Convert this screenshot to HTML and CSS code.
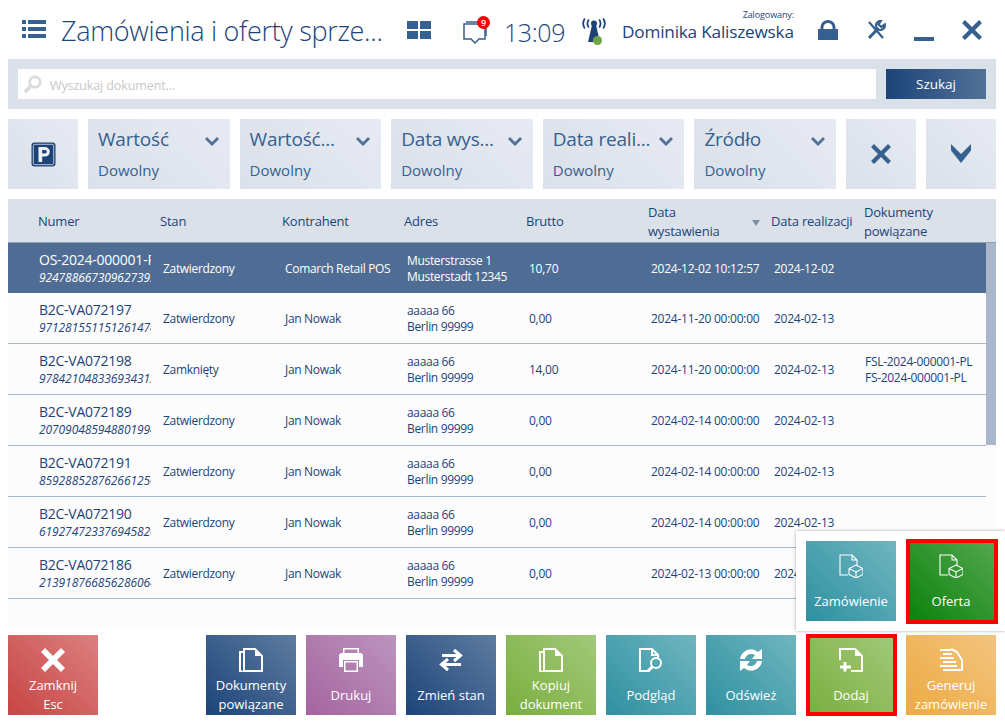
FILE: index.html
```html
<!DOCTYPE html>
<html lang="pl">
<head>
  <meta charset="UTF-8">
  <title>Zamówienia i oferty sprzedaży</title>
  <link rel="stylesheet" href="styles.css">
</head>
<body>
  <header class="topbar">
    <svg class="ico menu-ico" viewBox="0 0 24 18"><path d="M0 0h4v4H0zM6 0h18v4H6zM0 7h4v4H0zM6 7h18v4H6zM0 14h4v4H0zM6 14h18v4H6z"/></svg>
    <h1 class="title">Zamówienia i oferty sprze...</h1>
    <svg class="ico grid-ico" viewBox="0 0 24 18"><path d="M0 0h11v8H0zM13 0h11v8H13zM0 10h11v8H0zM13 10h11v8H13z"/></svg>
    <div class="chat">
      <svg class="ico chat-ico" viewBox="0 0 24 23"><path d="M1 3h21v15h-6l-4 4-4-4H1z"/><path d="M3 1h20v14"/></svg>
      <span class="chat-badge">9</span>
    </div>
    <span class="clock">13:09</span>
    <div class="signal">
      <svg class="ico signal-ico" viewBox="0 0 24 25"><path d="M10 7h4l4 17H6z"/><circle cx="12" cy="5.500" r="3"/><path class="wave" d="M6.800 1.500Q4 5.500 6.800 9.500M17.200 1.500Q20 5.500 17.200 9.500M2.800 0.500Q-.500 5.500 2.800 10.500M21.200 0.500Q24.500 5.500 21.200 10.500"/></svg>
      <span class="signal-dot"></span>
    </div>
    <div class="user">
      <span class="user-label">Zalogowany:</span>
      <span class="user-name">Dominika Kaliszewska</span>
    </div>
    <svg class="ico lock-ico" viewBox="0 0 20 20"><path d="M0 9h20v11H0z"/><path class="shackle" d="M4 10V7a6 5.500 0 0 1 12 0v3"/></svg>
    <svg class="ico tools-ico" viewBox="0 0 20 20"><path class="tool" d="M3 2l14 16"/><path class="tool wide" d="M3 18L12.500 8"/><path class="tool" d="M18.800 4.500a4.500 4.500 0 1 1-4-3.500L12.500 4.500l3 2.500z"/></svg>
    <span class="ico minimize-ico"></span>
    <svg class="ico close-ico" viewBox="0 0 20 20"><path d="M3 0l7 7 7-7 3 3-7 7 7 7-3 3-7-7-7 7-3-3 7-7-7-7z"/></svg>
  </header>

  <section class="search-bar">
    <div class="search-input">
      <svg class="search-ico" viewBox="0 0 20 20"><circle cx="12.500" cy="7.500" r="5.500" fill="none" stroke="#dcdcdc" stroke-width="3"/><path d="M8 12l-6 6" stroke="#dcdcdc" stroke-width="4"/></svg>
      <span class="search-text">Wyszukaj dokument...</span>
    </div>
    <button class="search-btn">Szukaj</button>
  </section>

  <section class="filters">
    <div class="tile-sq">
      <svg class="p-ico" viewBox="0 0 25 25"><rect x="0.500" y="0.500" width="24" height="24" rx="3" fill="#1c4479"/><rect x="2.300" y="2.300" width="20.400" height="20.400" rx="1.500" fill="none" stroke="#e0e5ec" stroke-width=".8"/><path d="M7.500 5h6.500a4.800 4.800 0 0 1 0 9.600h-2.800V20H7.500zM11.200 8v3.600H14a1.800 1.800 0 0 0 0-3.600z" fill="#eef1f5" fill-rule="evenodd"/></svg>
    </div>
    <div class="filter"><div class="filter-top"><span class="filter-name">Wartość</span><svg class="chev" viewBox="0 0 14 10"><path d="M0 2l2-2 5 5 5-5 2 2-7 7z"/></svg></div><span class="filter-val">Dowolny</span></div>
    <div class="filter"><div class="filter-top"><span class="filter-name">Wartość...</span><svg class="chev" viewBox="0 0 14 10"><path d="M0 2l2-2 5 5 5-5 2 2-7 7z"/></svg></div><span class="filter-val">Dowolny</span></div>
    <div class="filter"><div class="filter-top"><span class="filter-name">Data wys...</span><svg class="chev" viewBox="0 0 14 10"><path d="M0 2l2-2 5 5 5-5 2 2-7 7z"/></svg></div><span class="filter-val">Dowolny</span></div>
    <div class="filter"><div class="filter-top"><span class="filter-name">Data reali...</span><svg class="chev" viewBox="0 0 14 10"><path d="M0 2l2-2 5 5 5-5 2 2-7 7z"/></svg></div><span class="filter-val">Dowolny</span></div>
    <div class="filter"><div class="filter-top"><span class="filter-name">Źródło</span><svg class="chev" viewBox="0 0 14 10"><path d="M0 2l2-2 5 5 5-5 2 2-7 7z"/></svg></div><span class="filter-val">Dowolny</span></div>
    <div class="tile-sq"><svg class="x-ico" viewBox="0 0 20 20"><path d="M3 0l7 7 7-7 3 3-7 7 7 7-3 3-7-7-7 7-3-3 7-7-7-7z"/></svg></div>
    <div class="tile-sq"><svg class="down-ico" viewBox="0 0 20 20"><path d="M0 0l10 10L20 0v6.500L10 19 0 6.500z"/></svg></div>
  </section>

  <section class="grid">
    <div class="grid-head">
      <span class="c-num">Numer</span>
      <span class="c-stan">Stan</span>
      <span class="c-kon">Kontrahent</span>
      <span class="c-adr">Adres</span>
      <span class="c-bru">Brutto</span>
      <span class="c-wys">Data<br>wystawienia<i class="sort"></i></span>
      <span class="c-rea">Data realizacji</span>
      <span class="c-dok">Dokumenty<br>powiązane</span>
    </div>
    <div class="grid-body">
      <div class="rows">
        <div class="row selected">
          <div class="c-num"><b>OS-2024-000001-PL</b><em>92478866730962739312</em></div>
          <span class="c-stan">Zatwierdzony</span><span class="c-kon">Comarch Retail POS</span>
          <span class="c-adr">Musterstrasse 1<br>Musterstadt 12345</span><span class="c-bru">10,70</span>
          <span class="c-wys">2024-12-02 10:12:57</span><span class="c-rea">2024-12-02</span><span class="c-dok"></span>
        </div>
        <div class="row">
          <div class="c-num"><b>B2C-VA072197</b><em>97128155115126147412</em></div>
          <span class="c-stan">Zatwierdzony</span><span class="c-kon">Jan Nowak</span>
          <span class="c-adr">aaaaa 66<br>Berlin 99999</span><span class="c-bru">0,00</span>
          <span class="c-wys">2024-11-20 00:00:00</span><span class="c-rea">2024-02-13</span><span class="c-dok"></span>
        </div>
        <div class="row">
          <div class="c-num"><b>B2C-VA072198</b><em>97842104833693431212</em></div>
          <span class="c-stan">Zamknięty</span><span class="c-kon">Jan Nowak</span>
          <span class="c-adr">aaaaa 66<br>Berlin 99999</span><span class="c-bru">14,00</span>
          <span class="c-wys">2024-11-20 00:00:00</span><span class="c-rea">2024-02-13</span><span class="c-dok">FSL-2024-000001-PL<br>FS-2024-000001-PL</span>
        </div>
        <div class="row">
          <div class="c-num"><b>B2C-VA072189</b><em>20709048594880199412</em></div>
          <span class="c-stan">Zatwierdzony</span><span class="c-kon">Jan Nowak</span>
          <span class="c-adr">aaaaa 66<br>Berlin 99999</span><span class="c-bru">0,00</span>
          <span class="c-wys">2024-02-14 00:00:00</span><span class="c-rea">2024-02-13</span><span class="c-dok"></span>
        </div>
        <div class="row">
          <div class="c-num"><b>B2C-VA072191</b><em>85928852876266125012</em></div>
          <span class="c-stan">Zatwierdzony</span><span class="c-kon">Jan Nowak</span>
          <span class="c-adr">aaaaa 66<br>Berlin 99999</span><span class="c-bru">0,00</span>
          <span class="c-wys">2024-02-14 00:00:00</span><span class="c-rea">2024-02-13</span><span class="c-dok"></span>
        </div>
        <div class="row">
          <div class="c-num"><b>B2C-VA072190</b><em>61927472337694582012</em></div>
          <span class="c-stan">Zatwierdzony</span><span class="c-kon">Jan Nowak</span>
          <span class="c-adr">aaaaa 66<br>Berlin 99999</span><span class="c-bru">0,00</span>
          <span class="c-wys">2024-02-14 00:00:00</span><span class="c-rea">2024-02-13</span><span class="c-dok"></span>
        </div>
        <div class="row">
          <div class="c-num"><b>B2C-VA072186</b><em>21391876685628606412</em></div>
          <span class="c-stan">Zatwierdzony</span><span class="c-kon">Jan Nowak</span>
          <span class="c-adr">aaaaa 66<br>Berlin 99999</span><span class="c-bru">0,00</span>
          <span class="c-wys">2024-02-13 00:00:00</span><span class="c-rea">2024-02-13</span><span class="c-dok"></span>
        </div>
      </div>
      <div class="scrollbar"></div>
    </div>
  </section>

  <footer class="actions">
    <button class="act red">
      <svg viewBox="0 0 24 24"><path d="M4 0l8 8 8-8 4 4-8 8 8 8-4 4-8-8-8 8-4-4 8-8-8-8z"/></svg>
      <span>Zamknij<br>Esc</span>
    </button>
    <span class="spacer"></span>
    <button class="act navy">
      <svg viewBox="0 0 24 24" class="line"><path d="M5 1h11l7 7v15H5zM5 4H1v19l3 1h15"/><path class="solid" d="M16 1l7 7h-7z"/></svg>
      <span>Dokumenty<br>powiązane</span>
    </button>
    <button class="act purple">
      <svg viewBox="0 0 24 24"><path d="M4 5V0h16v5h-1.500V1.500h-13V5z"/><path d="M3 5h18a3 3 0 0 1 3 3v11h-4v-7H4v7H0V8a3 3 0 0 1 3-3z"/><path d="M5 13h14v11H5zM6.500 14.500v8h11v-8z" fill-rule="evenodd"/></svg>
      <span>Drukuj</span>
    </button>
    <button class="act navy">
      <svg viewBox="0 0 24 24" class="line heavy"><path d="M3 7.500h18M15 2l6.500 5.500L15 13"/><path d="M22 16.500H3M9 11l-6.500 5.500L9 22"/></svg>
      <span>Zmień stan</span>
    </button>
    <button class="act green">
      <svg viewBox="0 0 24 24" class="line"><path d="M5 1h11l7 7v15H5zM5 4H1v19l3 1h15"/><path class="solid" d="M16 1l7 7h-7z"/></svg>
      <span>Kopiuj<br>dokument</span>
    </button>
    <button class="act teal">
      <svg viewBox="0 0 24 24" class="line"><path d="M11 23H1V1h12l6 6v3M13 1v6h6"/><circle cx="17" cy="15" r="5"/><path d="M13.500 18.500l-5 5" stroke-width="3"/></svg>
      <span>Podgląd</span>
    </button>
    <button class="act teal">
      <svg viewBox="0 0 24 24"><path d="M1 11A11 11 0 0 1 19 4l4-3v10H13l3-4A6.500 6.500 0 0 0 6 11zM23 13A11 11 0 0 1 5 20l-4 3V13h10l-3 4a6.500 6.500 0 0 0 10-4z"/></svg>
      <span>Odśwież</span>
    </button>
    <button class="act green marked">
      <svg viewBox="0 0 24 24" class="line"><path d="M1 12V1h15l7 7v15H12"/><path class="solid" d="M16 1l7 7h-7z"/><path d="M6 14v9.500M1 19h11" stroke-width="3"/></svg>
      <span>Dodaj</span>
    </button>
    <button class="act orange">
      <svg viewBox="0 0 24 24" class="line"><path d="M1 2h11M4 6h9M1 10h14M4 14h13M1 18h17M4 22h19M12 1l6 3 5 8v11" stroke-width="2"/></svg>
      <span>Generuj<br>zamówienie</span>
    </button>
  </footer>

  <div class="popup">
    <button class="act teal">
      <svg viewBox="0 0 24 24" class="line thin"><path d="M9 21H1V1h12l5 5v5M13 1v5h5"/><path d="M17 11l7 3.500v6L17 24l-7-3.500v-6zM10 14.500l7 3.500 7-3.500M17 18v6"/></svg>
      <span>Zamówienie</span>
    </button>
    <button class="act dark-green marked-top">
      <svg viewBox="0 0 24 24" class="line thin"><path d="M9 21H1V1h12l5 5v5M13 1v5h5"/><path d="M17 11l7 3.500v6L17 24l-7-3.500v-6zM10 14.500l7 3.500 7-3.500M17 18v6"/></svg>
      <span>Oferta</span>
    </button>
  </div>
</body>
</html>
```

FILE: styles.css
```css
* {
  box-sizing: border-box;
}
html, body {
  margin: 0;
  height: 723px;
  overflow: hidden;
}
body {
  position: relative;
  padding: 0 9px 0 8px;
  font-family: "Open Sans", "Noto Sans", sans-serif;
  color: #1c4479;
  background-color: #fff;
}

/* gorny pasek */
.topbar {
  display: flex;
  align-items: center;
  height: 59px;
  padding-left: 14px;
}
.ico {
  display: block;
  fill: #36608f;
  flex: none;
}
.menu-ico {
  width: 24px;
  height: 18px;
  margin-top: -1px;
}
.title {
  flex: none;
  width: 346px;
  margin: 2px 0 0 15px;
  font-size: 27px;
  font-weight: 300;
  white-space: nowrap;
  letter-spacing: -0.3px;
}
.grid-ico {
  width: 24px;
  height: 18px;
}
.chat {
  position: relative;
  flex: none;
  margin: 5px 0 0 32px;
  width: 24px;
  height: 23px;
}
.chat-ico {
  width: 24px;
  height: 23px;
  fill: none;
  stroke: #36608f;
  stroke-width: 1.5;
}
.chat-badge {
  position: absolute;
  top: -5px;
  left: 14px;
  width: 13px;
  height: 13px;
  border-radius: 50%;
  background: #f00;
  color: #fff;
  font-size: 9px;
  font-weight: 600;
  line-height: 13px;
  text-align: center;
}
.clock {
  margin: 4px 0 0 17px;
  font-size: 25px;
  font-weight: 300;
  letter-spacing: -0.4px;
}
.signal {
  position: relative;
  flex: none;
  margin: 1px 0 0 17px;
  width: 24px;
  height: 25px;
}
.signal-ico {
  width: 24px;
  height: 25px;
  fill: #1c4479;
}
.signal-ico .wave {
  fill: none;
  stroke: #1c4479;
  stroke-width: 1.8;
}
.signal-dot {
  position: absolute;
  left: 11px;
  top: 18px;
  width: 9px;
  height: 9px;
  border-radius: 50%;
  background: #6fa344;
}
.user {
  position: relative;
  flex: none;
  margin: 4px 0 0 16px;
  width: 177px;
}
.user-label {
  position: absolute;
  right: 5px;
  top: -12px;
  font-size: 9px;
  letter-spacing: -0.1px;
}
.user-name {
  font-size: 17.2px;
  white-space: nowrap;
  letter-spacing: -0.2px;
}
.lock-ico {
  width: 20px;
  height: 20px;
  margin-left: 19px;
}
.lock-ico .shackle {
  fill: none;
  stroke: #36608f;
  stroke-width: 3;
}
.tools-ico {
  width: 20px;
  height: 20px;
  margin-left: 28px;
}
.tools-ico .tool {
  stroke: #36608f;
  stroke-width: 2.2;
  fill: none;
}
.tools-ico .wide {
  stroke-width: 3;
}
.minimize-ico {
  width: 20px;
  height: 4px;
  margin: 18px 0 0 28px;
  background: #36608f;
}
.close-ico {
  width: 20px;
  height: 20px;
  margin-left: 28px;
}

/* wyszukiwarka */
.search-bar {
  display: flex;
  gap: 10px;
  height: 50px;
  padding: 10px;
  background-color: #dbe1e9;
}
.search-input {
  flex: 1;
  display: flex;
  align-items: center;
  gap: 8px;
  padding-left: 4px;
  background-color: #fff;
  color: #c8c8c8;
  font-size: 12.5px;
  letter-spacing: -0.1px;
}
.search-text {
  margin-top: 2px;
}
.search-ico {
  width: 19px;
  height: 19px;
  margin-left: 1px;
}
.search-btn {
  width: 100px;
  border: none;
  padding: 0;
  background: linear-gradient(90deg, #1c4479, #527197);
  color: #fff;
  font-family: inherit;
  font-size: 13.5px;
}

/* filtry */
.filters {
  display: flex;
  gap: 10px;
  margin-top: 10px;
  height: 70px;
}
.tile-sq {
  flex: none;
  width: 70px;
  display: flex;
  align-items: center;
  justify-content: center;
  background: linear-gradient(45deg, #dbe1e9, #e7eaf2);
}
.p-ico {
  width: 25px;
  height: 25px;
}
.x-ico {
  width: 20px;
  height: 20px;
  fill: #36608f;
}
.down-ico {
  width: 20px;
  height: 20px;
  fill: #36608f;
}
.filter {
  flex: 1;
  min-width: 0;
  padding: 6px 10px 0;
  background: linear-gradient(45deg, #dbe1e9, #e7eaf2);
  color: #36608f;
}
.filter-top {
  display: flex;
  align-items: center;
  justify-content: space-between;
  height: 28px;
  padding-right: 1px;
}
.filter-name {
  font-size: 19px;
  white-space: nowrap;
  letter-spacing: -0.2px;
}
.chev {
  flex: none;
  width: 14px;
  height: 10px;
  margin-top: 5px;
  fill: #527197;
}
.filter-val {
  display: block;
  margin-top: 7px;
  font-size: 15px;
}

/* tabela */
.grid {
  margin-top: 10px;
}
.grid-head, .row {
  display: grid;
  grid-template-columns: 122px 122px 122px 122px 122px 123px 93px 1fr;
  align-items: center;
}
.grid-head {
  height: 44px;
  padding: 2px 0 0 30px;
  background-color: #dbe1e9;
  border-bottom: 1px solid #8fa2ba;
  font-size: 13px;
  line-height: 19px;
  letter-spacing: -0.2px;
}
.c-wys {
  position: relative;
}
.sort {
  position: absolute;
  right: 11px;
  top: 17px;
  border: 4px solid transparent;
  border-top: 6px solid #7b8ea8;
  border-bottom: 0;
}
.grid-body {
  display: flex;
  height: 386px;
  background-color: #fcfcfc;
}
.rows {
  flex: 1;
  min-width: 0;
}
.scrollbar {
  flex: none;
  width: 10px;
  height: 202px;
  background-color: #aab7ca;
}
.row {
  height: 51px;
  padding: 2px 0 0 31px;
  border-bottom: 1px solid #a9b8d0;
  font-size: 12px;
  line-height: 16px;
  letter-spacing: -0.25px;
}
.row > span {
  padding-left: 2px;
  white-space: nowrap;
  overflow: hidden;
}
.row .c-stan, .row .c-kon, .row .c-adr {
  letter-spacing: -0.32px;
}
.row .c-wys {
  padding-left: 2px;
}
.row .c-dok {
  padding-left: 0;
  letter-spacing: -0.3px;
}
.row .c-num {
  margin-top: -1px;
}
.row b, .row em {
  display: block;
  overflow: hidden;
  white-space: nowrap;
  width: 112px;
}
.row b {
  font-weight: 400;
  font-size: 14px;
  line-height: 19px;
}
.row em {
  font-size: 12px;
  line-height: 18px;
  letter-spacing: -0.08px;
}
.row.selected {
  height: 50px;
  background-color: #4f6d94;
  border-bottom: none;
  color: #fff;
}

/* przyciski */
.actions {
  display: flex;
  gap: 10px;
  margin-top: 6px;
}
.spacer {
  width: 98px;
}
.act {
  position: relative;
  flex: none;
  display: flex;
  flex-direction: column;
  align-items: center;
  width: 90px;
  height: 80px;
  border: none;
  padding: 13px 0 0;
  color: #fff;
  font-family: inherit;
  font-size: 13px;
  line-height: 19px;
}
.act svg {
  flex: none;
  width: 24px;
  height: 24px;
  fill: #fff;
}
.act svg.line {
  fill: none;
  stroke: #fff;
  stroke-width: 2;
}
.act svg.thin {
  stroke-width: 1.1;
}
.act svg.heavy {
  stroke-width: 3;
}
.act svg .solid {
  fill: #fff;
  stroke: none;
}
.act span {
  flex: 1;
  display: flex;
  align-items: center;
  padding-top: 3px;
  text-align: center;
}
/* czerwone ramki z adnotacji */
.marked::after, .marked-top::after {
  content: "";
  position: absolute;
  border: 4px solid #f00;
}
.marked::after {
  inset: -1px -1px -1px 0;
}
.marked-top::after {
  inset: -2px -2px -3px 0;
}
.red {
  background: linear-gradient(45deg, #c84444, #dc8080);
}
.navy {
  background: linear-gradient(45deg, #1c4479, #5f7ca0);
}
.purple {
  background: linear-gradient(45deg, #a4649e, #bc94be);
}
.green {
  background: linear-gradient(45deg, #79ae3e, #a3c97a);
}
.teal {
  background: linear-gradient(45deg, #2e90a0, #70b6c0);
}
.orange {
  background: linear-gradient(45deg, #edaa40, #f3c480);
}
.dark-green {
  background: linear-gradient(45deg, #0a800a, #54a850);
}

/* menu Dodaj */
.popup {
  position: absolute;
  left: 796px;
  top: 531px;
  display: flex;
  gap: 10px;
  width: 209px;
  height: 100px;
  padding: 10px;
  background-color: #fff;
  box-shadow: 0 0 3px rgba(0, 0, 0, 0.35);
}
```
